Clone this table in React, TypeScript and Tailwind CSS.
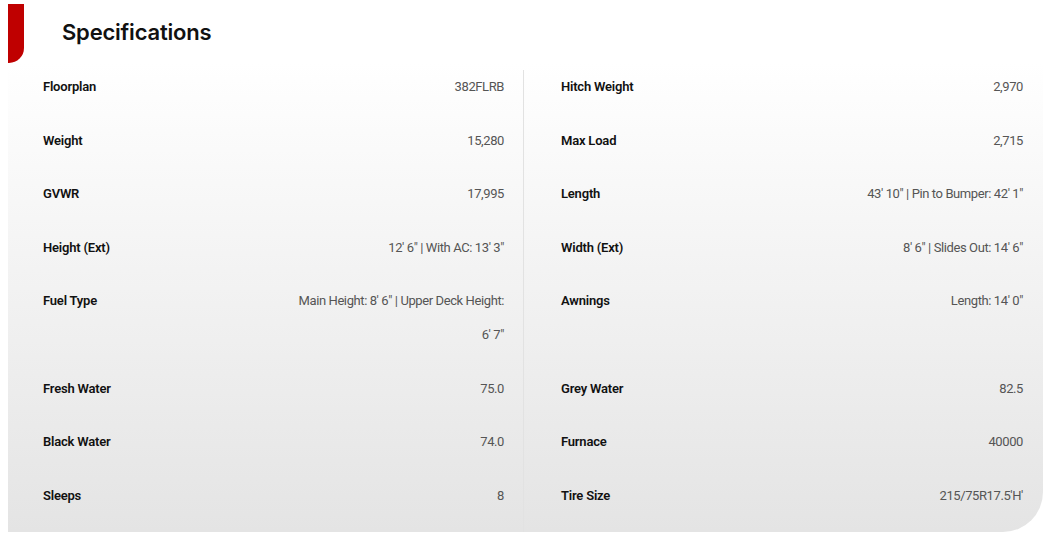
import React from "react";

type Spec = { label: string; value: React.ReactNode; tall?: boolean };

const left: Spec[] = [
  { label: "Floorplan", value: "382FLRB" },
  { label: "Weight", value: "15,280" },
  { label: "GVWR", value: "17,995" },
  { label: "Height (Ext)", value: "12' 6\" | With AC: 13' 3\"" },
  { label: "Fuel Type", value: "Main Height: 8' 6\" | Upper Deck Height: 6' 7\"", tall: true },
  { label: "Fresh Water", value: "75.0" },
  { label: "Black Water", value: "74.0" },
  { label: "Sleeps", value: "8" },
];

const right: Spec[] = [
  { label: "Hitch Weight", value: "2,970" },
  { label: "Max Load", value: "2,715" },
  { label: "Length", value: "43' 10\" | Pin to Bumper: 42' 1\"" },
  { label: "Width (Ext)", value: "8' 6\" | Slides Out: 14' 6\"" },
  { label: "Awnings", value: "Length: 14' 0\"", tall: true },
  { label: "Grey Water", value: "82.5" },
  { label: "Furnace", value: "40000" },
  { label: "Tire Size", value: "215/75R17.5'H'" },
];

function Column({ items, side }: { items: Spec[]; side: "l" | "r" }) {
  return (
    <div
      className={
        "flex flex-col gap-[20px] pb-[20px] " +
        (side === "l" ? "pl-[35px] pr-[19px] border-r border-[#e2e2e2]" : "pl-[37px] pr-[20px]")
      }
    >
      {items.map((s) => (
        <div key={s.label} className="flex justify-between items-start leading-[33.6px] text-[13px]">
          <div className="font-semibold text-[#111] tracking-[-0.2px] whitespace-nowrap">{s.label}</div>
          <div
            className={
              "text-[#555] text-right tracking-[-0.4px] " +
              (s.tall ? "w-[216px] min-h-[67.2px]" : "whitespace-nowrap")
            }
          >
            {s.value}
          </div>
        </div>
      ))}
    </div>
  );
}

export default function App() {
  return (
    <div
      className="w-[1051px] h-[547px] bg-white pt-[4px] px-[8px]"
      style={{ fontFamily: "Roboto, 'Open Sans', sans-serif" }}
    >
      <div className="flex items-start h-[59px]">
        <div className="w-[16px] h-[59px] bg-[#bf0000] rounded-br-[15px]" />
        <h2
          className="ml-[38px] mt-[14px] text-[22px] leading-[28px] font-semibold text-[#111] tracking-[-0.2px]"
          style={{ fontFamily: "Inter, sans-serif" }}
        >
          Specifications
        </h2>
      </div>
      <div className="w-[1035px] pt-[7px] bg-gradient-to-b from-white to-[#e4e4e4] rounded-br-[40px]">
        <div className="grid grid-cols-[516px_519px]">
          <Column items={left} side="l" />
          <Column items={right} side="r" />
        </div>
      </div>
    </div>
  );
}
